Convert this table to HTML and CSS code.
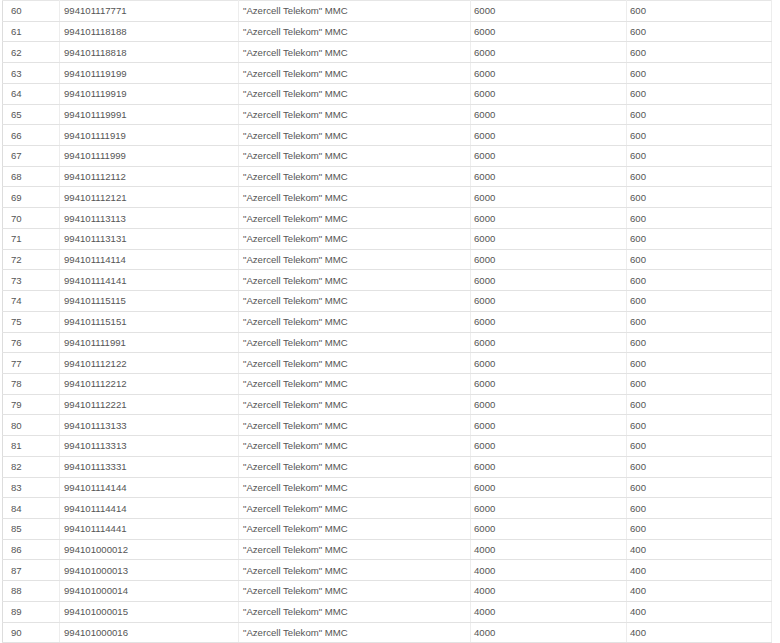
FILE: index.html
```html
<!DOCTYPE html>
<html lang="az">
<head>
    <meta charset="UTF-8">
    <title>Nömrələr</title>
    <link rel="stylesheet" href="styles.css">
</head>
<body>
    <table class="numbers">
        <colgroup>
            <col class="c-id">
            <col class="c-num">
            <col class="c-op">
            <col class="c-price">
            <col class="c-fee">
        </colgroup>
        <tbody>
            <tr><td>60</td><td>994101117771</td><td>"Azercell Telekom" MMC</td><td>6000</td><td>600</td></tr>
            <tr><td>61</td><td>994101118188</td><td>"Azercell Telekom" MMC</td><td>6000</td><td>600</td></tr>
            <tr><td>62</td><td>994101118818</td><td>"Azercell Telekom" MMC</td><td>6000</td><td>600</td></tr>
            <tr><td>63</td><td>994101119199</td><td>"Azercell Telekom" MMC</td><td>6000</td><td>600</td></tr>
            <tr><td>64</td><td>994101119919</td><td>"Azercell Telekom" MMC</td><td>6000</td><td>600</td></tr>
            <tr><td>65</td><td>994101119991</td><td>"Azercell Telekom" MMC</td><td>6000</td><td>600</td></tr>
            <tr><td>66</td><td>994101111919</td><td>"Azercell Telekom" MMC</td><td>6000</td><td>600</td></tr>
            <tr><td>67</td><td>994101111999</td><td>"Azercell Telekom" MMC</td><td>6000</td><td>600</td></tr>
            <tr><td>68</td><td>994101112112</td><td>"Azercell Telekom" MMC</td><td>6000</td><td>600</td></tr>
            <tr><td>69</td><td>994101112121</td><td>"Azercell Telekom" MMC</td><td>6000</td><td>600</td></tr>
            <tr><td>70</td><td>994101113113</td><td>"Azercell Telekom" MMC</td><td>6000</td><td>600</td></tr>
            <tr><td>71</td><td>994101113131</td><td>"Azercell Telekom" MMC</td><td>6000</td><td>600</td></tr>
            <tr><td>72</td><td>994101114114</td><td>"Azercell Telekom" MMC</td><td>6000</td><td>600</td></tr>
            <tr><td>73</td><td>994101114141</td><td>"Azercell Telekom" MMC</td><td>6000</td><td>600</td></tr>
            <tr><td>74</td><td>994101115115</td><td>"Azercell Telekom" MMC</td><td>6000</td><td>600</td></tr>
            <tr><td>75</td><td>994101115151</td><td>"Azercell Telekom" MMC</td><td>6000</td><td>600</td></tr>
            <tr><td>76</td><td>994101111991</td><td>"Azercell Telekom" MMC</td><td>6000</td><td>600</td></tr>
            <tr><td>77</td><td>994101112122</td><td>"Azercell Telekom" MMC</td><td>6000</td><td>600</td></tr>
            <tr><td>78</td><td>994101112212</td><td>"Azercell Telekom" MMC</td><td>6000</td><td>600</td></tr>
            <tr><td>79</td><td>994101112221</td><td>"Azercell Telekom" MMC</td><td>6000</td><td>600</td></tr>
            <tr><td>80</td><td>994101113133</td><td>"Azercell Telekom" MMC</td><td>6000</td><td>600</td></tr>
            <tr><td>81</td><td>994101113313</td><td>"Azercell Telekom" MMC</td><td>6000</td><td>600</td></tr>
            <tr><td>82</td><td>994101113331</td><td>"Azercell Telekom" MMC</td><td>6000</td><td>600</td></tr>
            <tr><td>83</td><td>994101114144</td><td>"Azercell Telekom" MMC</td><td>6000</td><td>600</td></tr>
            <tr><td>84</td><td>994101114414</td><td>"Azercell Telekom" MMC</td><td>6000</td><td>600</td></tr>
            <tr><td>85</td><td>994101114441</td><td>"Azercell Telekom" MMC</td><td>6000</td><td>600</td></tr>
            <tr><td>86</td><td>994101000012</td><td>"Azercell Telekom" MMC</td><td>4000</td><td>400</td></tr>
            <tr><td>87</td><td>994101000013</td><td>"Azercell Telekom" MMC</td><td>4000</td><td>400</td></tr>
            <tr><td>88</td><td>994101000014</td><td>"Azercell Telekom" MMC</td><td>4000</td><td>400</td></tr>
            <tr><td>89</td><td>994101000015</td><td>"Azercell Telekom" MMC</td><td>4000</td><td>400</td></tr>
            <tr><td>90</td><td>994101000016</td><td>"Azercell Telekom" MMC</td><td>4000</td><td>400</td></tr>
        </tbody>
    </table>
</body>
</html>
```

FILE: styles.css
```css
body {
    margin: 0;
    padding: 0 10px 0 2px;
    background-color: #ffffff;
    font-family: "Liberation Sans", Arial, sans-serif;
    overflow: hidden;
}

.numbers {
    width: 769px;
    border-collapse: collapse;
    table-layout: fixed;
    border-top: 1px solid #e6e6e6;
    border-left: 1px solid #dddddd;
    border-right: 1px solid #dddddd;
}

.c-id { width: 57px; }
.c-num { width: 179px; }
.c-op { width: 232px; }
.c-price { width: 156px; }
.c-fee { width: 145px; }

.numbers tr {
    height: 20.73px;
}

.numbers td {
    padding: 0 4px;
    font-size: 9.6px;
    color: #555555;
    vertical-align: middle;
    white-space: nowrap;
    border-bottom: 1px solid #e2e2e2;
    border-right: 1px solid #ededed;
}

.numbers td:first-child {
    padding-left: 8px;
}

.numbers td:nth-child(4),
.numbers td:nth-child(5) {
    padding-left: 3px;
}
```
